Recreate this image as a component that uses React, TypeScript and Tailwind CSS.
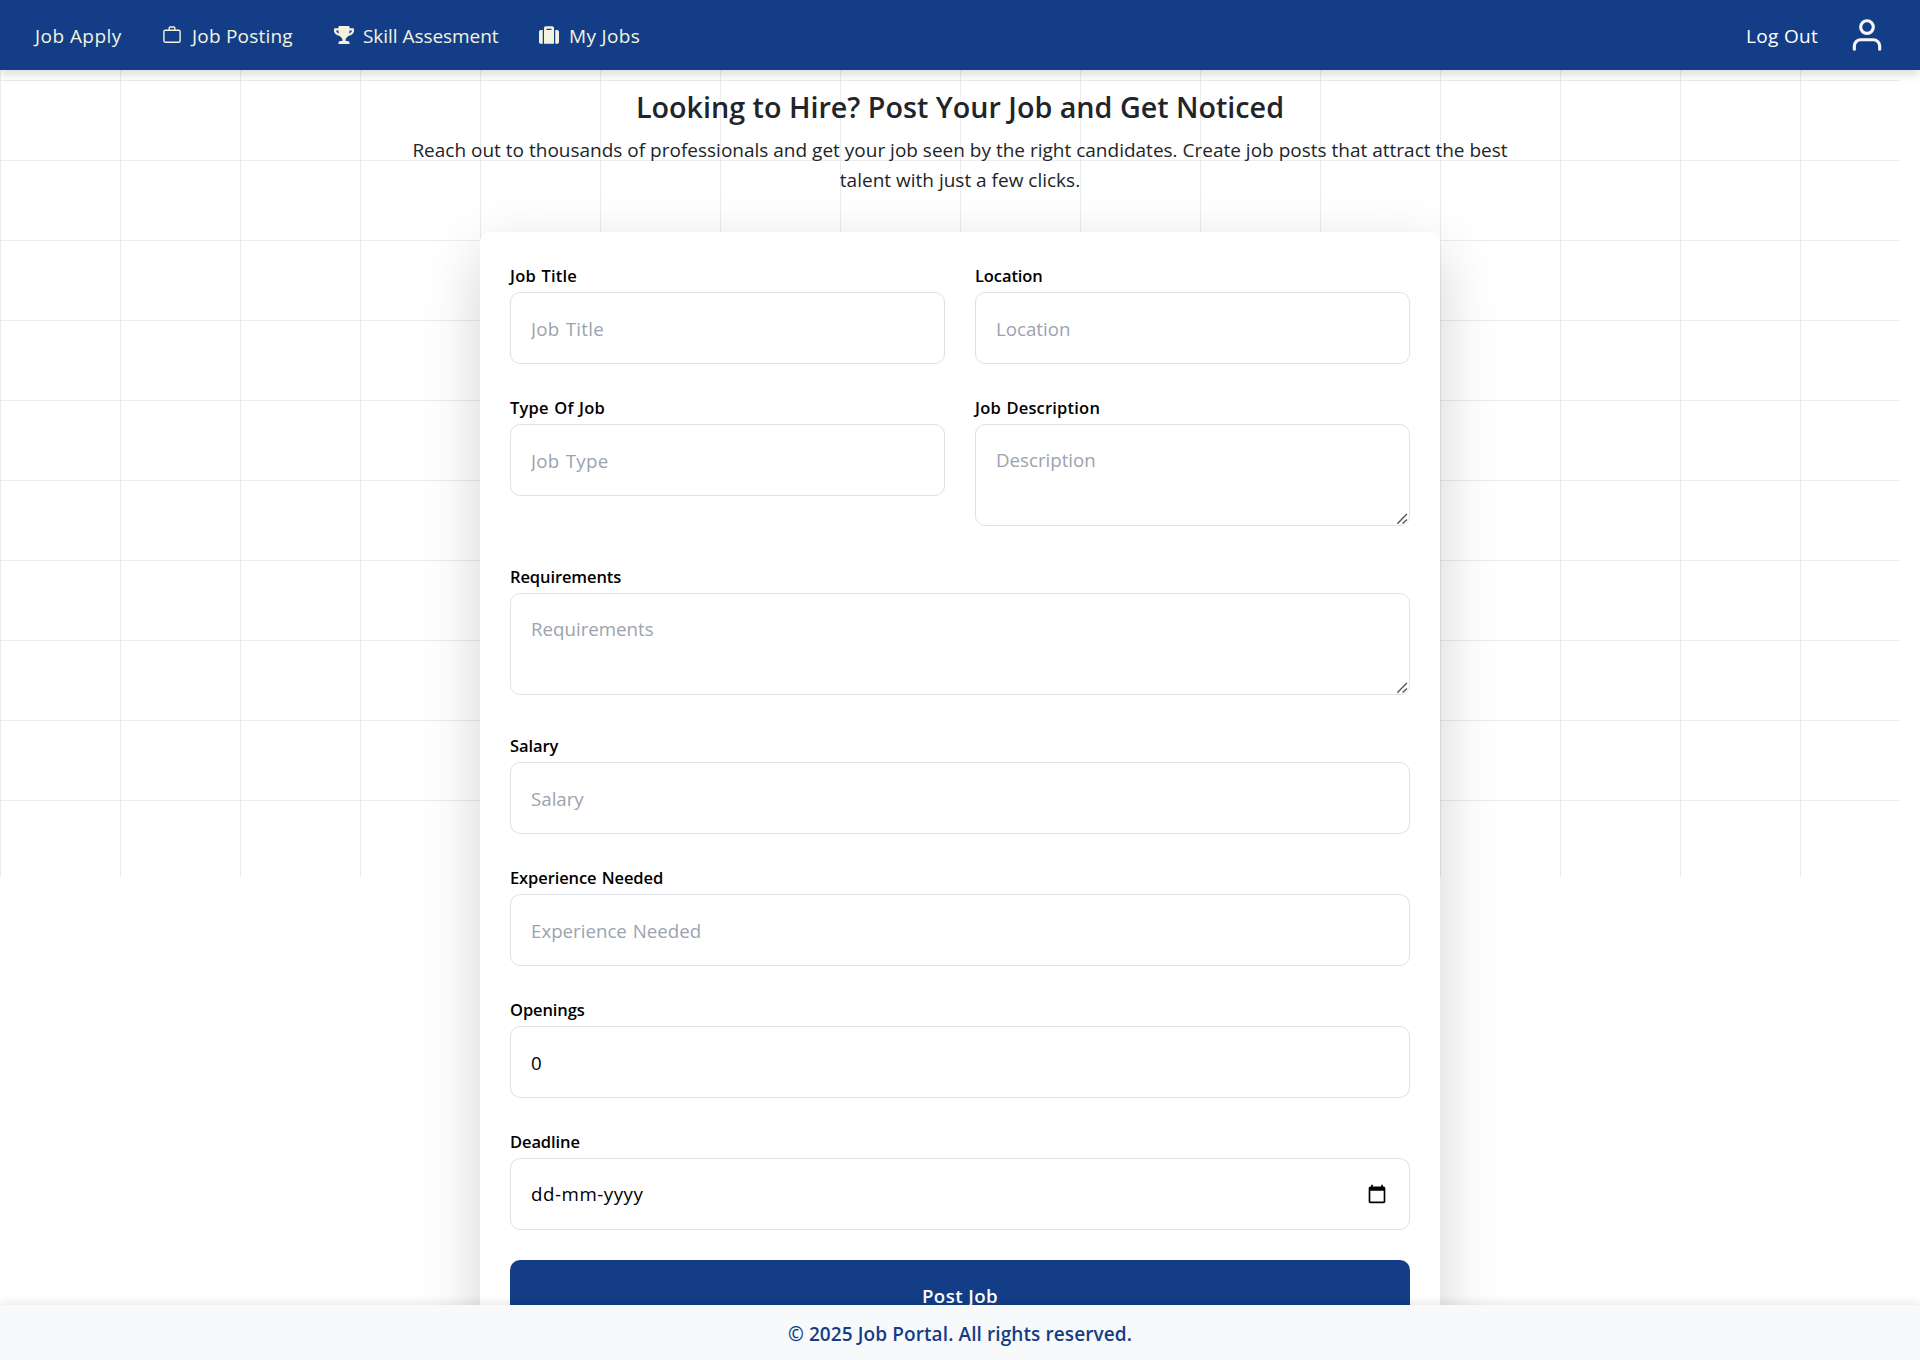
import type { ReactNode } from "react";
import { FaTrophy, FaSuitcase } from "react-icons/fa";

const field =
  "block w-full rounded-[10px] border border-[#dee2e6] bg-white px-5 py-5 text-[18.7px] leading-[30px] [word-spacing:1px] text-black outline-none placeholder:text-[#9ca3af]";

function tracking(text: string) {
  return text.includes("Job") ? "tracking-[0.3px]" : "tracking-[0px]";
}

function Field({ label, children }: { label: string; children: ReactNode }) {
  return (
    <div>
      <label
        className={`block h-[30px] text-[16.5px] leading-[28px] font-semibold [word-spacing:1px] text-black ${
          label.includes("Job") ? "tracking-[0.2px]" : "tracking-[-0.1px]"
        }`}
      >
        {label}
      </label>
      {children}
    </div>
  );
}

function TextInput({ label, placeholder }: { label: string; placeholder: string }) {
  return (
    <Field label={label}>
      <input className={`${field} h-[72px] ${tracking(placeholder)}`} placeholder={placeholder} />
    </Field>
  );
}

function TextArea({ label, placeholder }: { label: string; placeholder: string }) {
  return (
    <Field label={label}>
      <div className="relative mb-[7px]">
        <textarea className={`${field} h-[102px] resize-none`} placeholder={placeholder} />
        <svg
          className="pointer-events-none absolute right-0 bottom-0"
          width="16"
          height="16"
          viewBox="0 0 16 16"
          fill="none"
          stroke="#555555"
          strokeWidth="1.4"
        >
          <path d="M3.3 13.7 12.9 4.1M8.6 13.6 12.9 9.4" />
        </svg>
      </div>
    </Field>
  );
}

function BagIcon() {
  return (
    <svg
      className="-mt-[2px] shrink-0"
      width="20"
      height="20"
      viewBox="0 0 20 20"
      fill="none"
      stroke="currentColor"
      strokeWidth="1.4"
    >
      <rect x="0.9" y="5.2" width="16.2" height="12" rx="1.5" />
      <path d="M6.2 5.2V3a1 1 0 0 1 1-1h3.6a1 1 0 0 1 1 1v2.2" />
    </svg>
  );
}

function CalendarIcon() {
  return (
    <svg className="mr-[2px]" width="20" height="20" viewBox="0 0 24 24" fill="black">
      <path d="M20 3h-1V1h-2v2H7V1H5v2H4c-1.1 0-2 .9-2 2v16c0 1.1.9 2 2 2h16c1.1 0 2-.9 2-2V5c0-1.1-.9-2-2-2zm0 18H4V8h16v13z" />
    </svg>
  );
}

function Nav() {
  return (
    <nav className="relative z-10 flex h-[70px] w-full items-center justify-between bg-[#133e87] pt-[2px] pr-[34px] pl-[35px] text-[19px] text-[#f3f3e0] shadow-[0_4px_10px_rgba(0,0,0,0.15)]">
      <div className="flex items-center gap-10">
        <span className="w-[88px] tracking-[0.45px] whitespace-nowrap">Job Apply</span>
        <span className="flex w-[131px] items-center gap-[9px] tracking-[0.2px] whitespace-nowrap">
          <BagIcon />
          Job Posting
        </span>
        <span className="flex w-[165px] items-center gap-[9px] whitespace-nowrap">
          <FaTrophy className="-mt-[2px] size-5 shrink-0" />
          <span className="tracking-[-0.05px]">Skill Assesment</span>
        </span>
        <span className="flex items-center gap-[10px] tracking-[0.35px] whitespace-nowrap">
          <FaSuitcase className="-mt-[2px] size-5 shrink-0" />
          My Jobs
        </span>
      </div>
      <div className="flex items-center gap-[30px]">
        <span className="tracking-[0.3px] text-white">Log Out</span>
        <svg
          className="-mt-[3px]"
          width="38"
          height="38"
          viewBox="0 0 24 24"
          fill="none"
          stroke="#f5f5f5"
          strokeWidth="2"
          strokeLinecap="round"
          strokeLinejoin="round"
        >
          <path d="M20 21v-2a4 4 0 0 0-4-4H8a4 4 0 0 0-4 4v2" />
          <circle cx="12" cy="7" r="4" />
        </svg>
      </div>
    </nav>
  );
}

export default function App() {
  return (
    <div className="flex h-[1360px] w-full flex-col overflow-hidden bg-white font-['Open_Sans','Noto_Sans',sans-serif]">
      <Nav />
      <div className="relative min-h-0 flex-1">
        <div className="absolute top-[-70px] left-0 h-[877px] w-[1899px] bg-[linear-gradient(to_right,#ececec_1px,transparent_1px),linear-gradient(to_bottom,#ececec_1px,transparent_1px)] bg-[size:120px_80px]" />
        <main className="relative flex h-full flex-col items-center overflow-hidden pt-[19px]">
          <h1 className="text-[28.7px] leading-[36px] font-semibold text-[#212529]">
            Looking to Hire? Post Your Job and Get Noticed
          </h1>
          <p className="mt-[10px] text-center text-[19px] leading-[30px] text-[#212529]">
            Reach out to thousands of professionals and get your job seen by the right candidates. Create job posts that attract the best
            <br />
            talent with just a few clicks.
          </p>
          <form className="mt-[37px] flex w-[960px] shrink-0 flex-col gap-[30px] rounded-[10px] bg-white p-[30px] shadow-[0_20px_60px_rgba(0,0,0,0.175)]">
            <div className="grid grid-cols-2 gap-[30px]">
              <TextInput label="Job Title" placeholder="Job Title" />
              <TextInput label="Location" placeholder="Location" />
              <TextInput label="Type Of Job" placeholder="Job Type" />
              <TextArea label="Job Description" placeholder="Description" />
            </div>
            <TextArea label="Requirements" placeholder="Requirements" />
            <TextInput label="Salary" placeholder="Salary" />
            <TextInput label="Experience Needed" placeholder="Experience Needed" />
            <Field label="Openings">
              <input className={`${field} h-[72px]`} defaultValue="0" />
            </Field>
            <Field label="Deadline">
              <div className={`${field} h-[72px]`}>
                <div className="flex items-center justify-between">
                  <span className="tracking-[0.55px]">dd-mm-yyyy</span>
                  <CalendarIcon />
                </div>
              </div>
            </Field>
            <button
              type="button"
              className="h-[72px] rounded-[10px] bg-[#133e87] text-[18.7px] font-semibold tracking-[0.4px] text-white"
            >
              Post Job
            </button>
          </form>
        </main>
      </div>
      <footer className="relative z-10 flex h-[55px] shrink-0 items-center justify-center bg-[#f8f9fb] pt-1 text-[19px] font-semibold tracking-[0.1px] text-[#133e87] shadow-[0_-2px_10px_rgba(0,0,0,0.1)]">
        © 2025 Job Portal. All rights reserved.
      </footer>
    </div>
  );
}
